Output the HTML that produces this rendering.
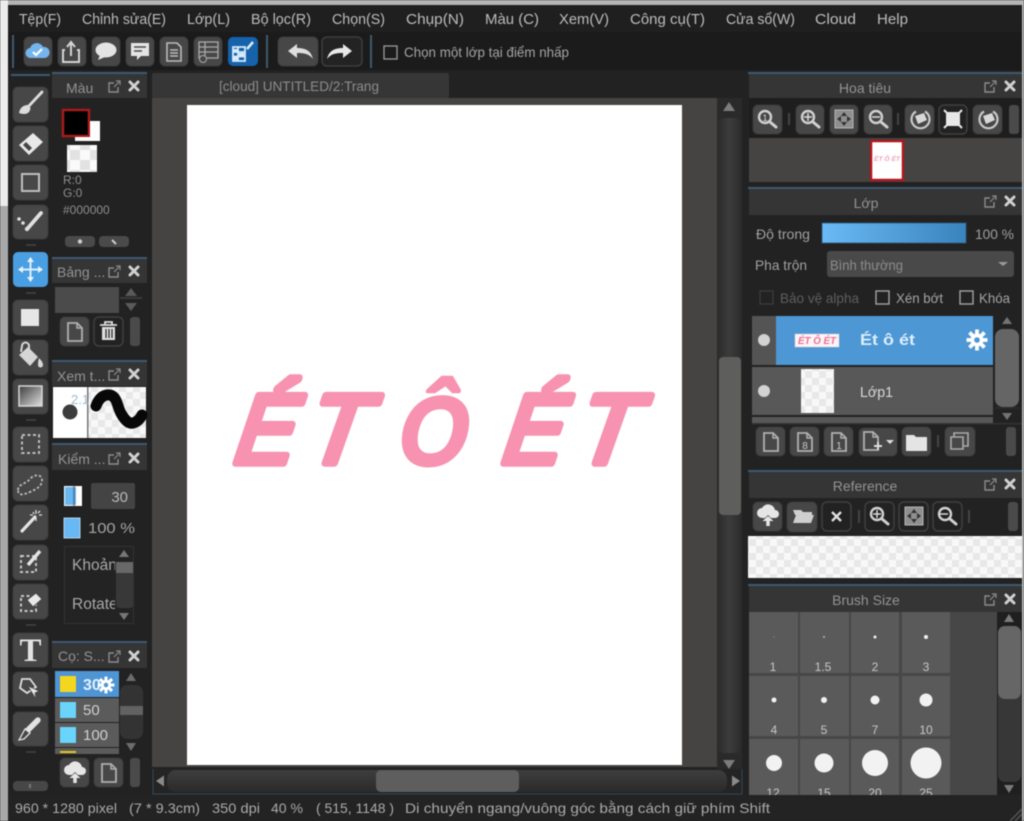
<!DOCTYPE html>
<html lang="vi">
<head>
<meta charset="utf-8">
<title>MediBang Paint</title>
<style>
html,body{margin:0;padding:0;width:1024px;height:821px;overflow:hidden;background:#222}
svg{display:block;filter:blur(.65px)}
text{font-family:"Liberation Sans","DejaVu Sans",sans-serif;font-size:14px;fill:#aaa}
.m{font-size:14.5px;fill:#bcbcbc}
.h{fill:#939393;font-size:14px}
.c{text-anchor:middle}
.n{fill:#c8c8c8;font-size:12px;text-anchor:middle}
.b{fill:#474747;stroke:#3a3a3a;stroke-width:1}
.d{fill:#222;stroke:#3f3f3f;stroke-width:1.5}
.ln{fill:#3e5a70}
.hd{fill:#353535}
.art{font-size:98px;font-style:italic;fill:#f793b0;stroke:#f793b0;stroke-width:7.5px;stroke-linejoin:round;stroke-linecap:round}
.art2{font-size:98px;font-style:italic;font-weight:bold;fill:#f793b0;stroke:#f793b0;stroke-width:3px;stroke-linejoin:round}
</style>
</head>
<body>
<svg xmlns="http://www.w3.org/2000/svg" width="1024" height="821" viewBox="0 0 1024 821">
<defs>
<pattern id="ck" width="20" height="20" patternUnits="userSpaceOnUse"><rect width="20" height="20" fill="#fafafa"/><rect width="10" height="10" fill="#e2e2e2"/><rect x="10" y="10" width="10" height="10" fill="#e2e2e2"/></pattern>
<pattern id="ck2" width="14" height="14" patternUnits="userSpaceOnUse"><rect width="14" height="14" fill="#f8f8f8"/><rect width="7" height="7" fill="#e8e8e8"/><rect x="7" y="7" width="7" height="7" fill="#e8e8e8"/></pattern>
<linearGradient id="bar" x1="0" x2="1" y1="0" y2="0"><stop offset="0" stop-color="#6abaf5"/><stop offset="1" stop-color="#3a83bd"/></linearGradient>
<linearGradient id="gr" x1="0" x2="1" y1="0" y2="1"><stop offset="0" stop-color="#3c3c3c"/><stop offset="1" stop-color="#e0e0e0"/></linearGradient>
<linearGradient id="sv" x1="0" x2="1"><stop offset="0" stop-color="#2c2c2c"/><stop offset=".5" stop-color="#3c3c3c"/><stop offset="1" stop-color="#2c2c2c"/></linearGradient>
<linearGradient id="sh" x1="0" x2="0" y1="0" y2="1"><stop offset="0" stop-color="#3e3e3e"/><stop offset="1" stop-color="#2a2a2a"/></linearGradient>

<g id="hdr"><path d="M6 3H1v9h9V7" fill="none" stroke="#8c8c8c" stroke-width="1.400"/><path d="M6 7l5-5M8 1h4v4" fill="none" stroke="#8c8c8c" stroke-width="1.200"/><path d="M22 2l8 8M30 2l-8 8" stroke="#d0d0d0" stroke-width="3" stroke-linecap="round"/></g>

<g id="doc"><path d="M8 6h9l5 5v13H8z" fill="none" stroke="#b0b0b0" stroke-width="1.800"/><path d="M17 6v5h5" fill="none" stroke="#b0b0b0" stroke-width="1.500"/></g>
<g id="mag"><circle cx="13" cy="13" r="6" fill="none" stroke="#d0d0d0" stroke-width="2.400"/><path d="M18 18l6 5" stroke="#d0d0d0" stroke-width="3" stroke-linecap="round"/></g>
<g id="fit"><rect x="6" y="6" width="18" height="18" fill="#8f8f8f" stroke="#b5b5b5"/><path d="M15 8l3 4h-6zM15 22l3-4h-6zM8 15l4-3v6zM22 15l-4-3v6z" fill="#333"/></g>
<g id="rot"><path d="M20 7.500a9 9 0 1 1-9 0" fill="none" stroke="#c8c8c8" stroke-width="2.200"/><path d="M10 12l9-3 3 7-9 4z" fill="#d8d8d8"/></g>
<g id="cup"><path d="M9 17a5 5 0 0 1 0-10 7 7 0 0 1 13 2 4 4 0 0 1 0 8h-4l-3-3-3 3z" fill="#e6e6e6"/><path d="M15 25v-7" stroke="#e6e6e6" stroke-width="3.500"/><path d="M9.500 20l5.500-5 5.500 5z" fill="#e6e6e6"/></g>
<g id="gear"><circle r="6.500" fill="#fff"/><path d="M0-10.500V10.500M-10.500 0H10.500M-7.500-7.500L7.500 7.500M-7.500 7.500L7.500-7.500" stroke="#fff" stroke-width="3.800"/><circle r="2.800" fill="#4d97d4"/></g>
</defs>

<!-- outer screenshot edge -->
<rect width="1024" height="821" fill="#222"/>
<rect width="1024" height="5" fill="#b4b4b4"/>
<rect y="0" width="8" height="206" fill="#ececec"/>
<rect y="206" width="8" height="615" fill="#a8a8a8"/>
<rect x="1022" width="2" height="821" fill="#b8b8b8"/>

<!-- menu -->
<rect x="8" y="5" width="1014" height="27" fill="#1f1f1f"/>
<rect x="8" y="32" width="1014" height="38" fill="#1b1b1b"/>
<rect x="8" y="70" width="1014" height="725" fill="#222"/>
<g>
<text class="m" x="19" y="24" textLength="42" lengthAdjust="spacingAndGlyphs">Tệp(F)</text>
<text class="m" x="82" y="24" textLength="84" lengthAdjust="spacingAndGlyphs">Chỉnh sửa(E)</text>
<text class="m" x="187" y="24" textLength="43" lengthAdjust="spacingAndGlyphs">Lớp(L)</text>
<text class="m" x="251" y="24" textLength="60" lengthAdjust="spacingAndGlyphs">Bộ lọc(R)</text>
<text class="m" x="332" y="24" textLength="53" lengthAdjust="spacingAndGlyphs">Chọn(S)</text>
<text class="m" x="406" y="24" textLength="58" lengthAdjust="spacingAndGlyphs">Chụp(N)</text>
<text class="m" x="485" y="24" textLength="54" lengthAdjust="spacingAndGlyphs">Màu (C)</text>
<text class="m" x="559" y="24" textLength="50" lengthAdjust="spacingAndGlyphs">Xem(V)</text>
<text class="m" x="630" y="24" textLength="75" lengthAdjust="spacingAndGlyphs">Công cụ(T)</text>
<text class="m" x="726" y="24" textLength="69" lengthAdjust="spacingAndGlyphs">Cửa sổ(W)</text>
<text class="m" x="815" y="24" textLength="41" lengthAdjust="spacingAndGlyphs">Cloud</text>
<text class="m" x="877" y="24" textLength="31" lengthAdjust="spacingAndGlyphs">Help</text>
</g>

<!-- toolbar -->
<rect x="12" y="35" width="2" height="33" fill="#3e5a70"/>
<rect x="266" y="35" width="2" height="33" fill="#3e5a70"/>
<rect x="370" y="35" width="2" height="33" fill="#3e5a70"/>
<rect class="b" x="24" y="37" width="28" height="29" rx="5"/>
<rect class="b" x="58" y="37" width="28" height="29" rx="5"/>
<rect class="b" x="92" y="37" width="28" height="29" rx="5"/>
<rect class="b" x="126" y="37" width="28" height="29" rx="5"/>
<rect class="b" x="160" y="37" width="28" height="29" rx="5"/>
<rect class="b" x="194" y="37" width="28" height="29" rx="5"/>
<rect x="228" y="37" width="30" height="29" rx="5" fill="#1663ac"/>
<path d="M31 58a5 5 0 0 1-1-10 7 7 0 0 1 13-1 5.500 5.500 0 0 1 2 11z" fill="#74b5ee"/><path d="M33 52l3 3 6-6" fill="none" stroke="#fff" stroke-width="2.200"/>
<path d="M65 50h-2v12h16V50h-2" fill="none" stroke="#d4d4d4" stroke-width="2"/><path d="M71 56V43M67 47l4-5 4 5" fill="none" stroke="#d4d4d4" stroke-width="2"/>
<ellipse cx="106" cy="50" rx="10.500" ry="7.500" fill="#e4e4e4"/><path d="M100 55l-2 5 7-3z" fill="#e4e4e4"/>
<path d="M131 43h18v13h-8l-4 4v-4h-6z" fill="#e4e4e4"/><path d="M134 47h12M134 51h8" stroke="#4a4a4a" stroke-width="1.600"/>
<path d="M167 43h10l4 4v14h-14z" fill="none" stroke="#bbb" stroke-width="1.600"/><path d="M170 50h8M170 53h8M170 56h8" stroke="#bbb" stroke-width="1.400"/>
<rect x="199" y="42" width="19" height="16" fill="none" stroke="#aaa" stroke-width="1.300"/><path d="M199 47h19M199 52h19M205 42v16" stroke="#aaa" stroke-width="1.300"/><circle cx="203" cy="59" r="3.500" fill="#474747" stroke="#aaa"/>
<path d="M233 47h12v14h-12zM238 47v14M233 52h12M233 56.500h12" fill="none" stroke="#d8ecfa" stroke-width="1.800"/><path d="M233 49h5v3h-5zM239 53h5v3h-5zM233 57h5v3h-5z" fill="#d8ecfa"/><path d="M247 49l6-7" stroke="#d8ecfa" stroke-width="2.500"/>
<rect class="b" x="278" y="37" width="40" height="29" rx="5"/>
<rect x="322" y="37" width="40" height="29" rx="5" fill="#232323" stroke="#3d3d3d" stroke-width="1.500"/>
<path d="M288 51l9-7v4c9 0 14 3 16 11-4-5-8-6-16-6v5z" fill="#dedede"/>
<path d="M352 51l-9-7v4c-9 0-14 3-16 11 4-5 8-6 16-6v5z" fill="#e8e8e8"/>
<rect x="384" y="46" width="13" height="13" fill="none" stroke="#9c9c9c" stroke-width="1.300"/>
<text x="404" y="57" textLength="165" lengthAdjust="spacingAndGlyphs" style="fill:#a4a4a4">Chọn một lớp tại điểm nhấp</text>

<!-- tools -->
<rect x="11" y="74" width="39" height="2" fill="#3e5a70"/>
<g fill="#474747" stroke="#3b3b3b">
<rect x="13" y="87" width="35" height="35" rx="5"/><rect x="13" y="126" width="35" height="35" rx="5"/><rect x="13" y="165" width="35" height="35" rx="5"/><rect x="13" y="205" width="35" height="34" rx="5"/>
<rect x="13" y="300" width="35" height="35" rx="5"/><rect x="13" y="340" width="35" height="35" rx="5"/><rect x="13" y="379" width="35" height="35" rx="5"/>
<rect x="13" y="427" width="35" height="35" rx="5"/><rect x="13" y="466" width="35" height="35" rx="5"/><rect x="13" y="505" width="35" height="35" rx="5"/><rect x="13" y="545" width="35" height="35" rx="5"/><rect x="13" y="584" width="35" height="35" rx="5"/>
<rect x="13" y="633" width="35" height="34" rx="5"/><rect x="13" y="672" width="35" height="34" rx="5"/><rect x="13" y="712" width="35" height="34" rx="5"/>
</g>
<rect x="13" y="252" width="35" height="35" rx="5" fill="#4a9fe2"/>
<path d="M26 245h10M26 293h10M26 420h10M26 625h10M26 752h10" stroke="#444" stroke-width="1.500"/>
<rect x="13" y="781" width="35" height="10" rx="4" fill="#474747"/><rect x="29" y="784" width="2" height="4" fill="#777"/>
<!-- brush -->
<path d="M42 92L27 108" stroke="#dcdcdc" stroke-width="2.800" stroke-linecap="round"/><path d="M19 113c1-6 5-8 9-8 3 2 3 4 1 7-3 3-7 2-10 1z" fill="#dcdcdc"/>
<!-- eraser -->
<path d="M19 145l14-12 10 9-14 13z" fill="#e8e8e8"/><path d="M23 145l6 6 3-3-6-6z" fill="#474747"/>
<!-- rect -->
<rect x="22" y="174" width="17" height="17" fill="none" stroke="#bfbfbf" stroke-width="2"/>
<!-- pen -->
<path d="M28 228l13-15" stroke="#e0e0e0" stroke-width="3.800" stroke-linecap="round"/><circle cx="19" cy="219" r="1.800" fill="#ddd"/><circle cx="23" cy="223" r="1.800" fill="#ddd"/><circle cx="27" cy="229" r="2.200" fill="#ddd"/>
<!-- move -->
<path d="M30.500 258v23M19 269.500h23" stroke="#d8eefc" stroke-width="2"/><path d="M30.500 257l3.500 5h-7zM30.500 282l3.500-5h-7zM18 269.500l5-3.500v7zM43 269.500l-5-3.500v7z" fill="#e4f2fc"/>
<!-- fill -->
<rect x="21" y="309" width="18" height="17" fill="#e6e6e6"/>
<!-- bucket -->
<path d="M19 355l9-8 10 10-8 9z" fill="#d6d6d6"/><path d="M21 352l1-6a3.500 3.500 0 0 1 7 0v5" fill="none" stroke="#d6d6d6" stroke-width="2"/><path d="M39 358c3 3 4 5 4 7a2.500 2.500 0 0 1-5 0c0-2 0-4 1-7z" fill="#d6d6d6"/>
<!-- gradient -->
<rect x="19" y="386" width="23" height="20" fill="url(#gr)" stroke="#d8d8d8" stroke-width="1.500"/>
<!-- selection -->
<rect x="22" y="435" width="17" height="18" fill="none" stroke="#bdbdbd" stroke-width="2" stroke-dasharray="3 2.500"/>
<path d="M18 490c0-6 8-6 12-11s12-5 12 1-5 9-12 12-12 4-12-2z" fill="none" stroke="#bdbdbd" stroke-width="1.800" stroke-dasharray="2.500 2"/>
<path d="M22 531l13-14" stroke="#e4e4e4" stroke-width="3.200" stroke-linecap="round"/><path d="M36 510v4M36 518v3M30 515h3M39 515h3M33 512l1 2M40 511l-2 2" stroke="#ddd" stroke-width="1.300"/>
<rect x="21" y="556" width="15" height="16" fill="none" stroke="#c6c6c6" stroke-width="2" stroke-dasharray="3 2.500"/><path d="M28 565l12-14" stroke="#e4e4e4" stroke-width="3.500"/>
<rect x="21" y="596" width="15" height="15" fill="none" stroke="#c6c6c6" stroke-width="2" stroke-dasharray="3 2.500"/><path d="M27 600l9-7 6 6-9 8z" fill="#e8e8e8" stroke="#474747"/>
<text x="30.500" y="661" text-anchor="middle" style="font-family:'Liberation Serif',serif;font-size:33px;font-weight:bold;fill:#e2e2e2">T</text>
<path d="M22 679h8l6 8-9 6-7-5z" fill="none" stroke="#ddd" stroke-width="1.800"/><path d="M28 686l11 5-4 2 1 6z" fill="#e8e8e8" stroke="#474747" stroke-width=".7"/>
<path d="M19 740l6-11 11-11c3-2 6 1 4 4l-11 11z" fill="#e2e2e2"/><path d="M19 740l6-11 5 4-6 6z" fill="#474747" stroke="#e2e2e2" stroke-width="1.300"/>

<!-- left panels -->
<rect x="52" y="72" width="95" height="2" class="ln"/>
<rect x="52" y="74" width="95" height="24" class="hd"/>
<text class="h" x="66" y="93">Màu</text>
<use href="#hdr" x="108" y="80"/>
<rect x="63" y="110" width="26" height="26" fill="#000" stroke="#a81a1a" stroke-width="2.500"/>
<path d="M90 121h10v20H75v-4h15z" fill="#fdfdfd"/>
<rect x="67" y="145" width="30" height="27" fill="url(#ck)"/>
<text x="63" y="184" style="font-size:12px;fill:#8e8e8e">R:0</text>
<text x="63" y="197" style="font-size:12px;fill:#8e8e8e">G:0</text>
<text x="63" y="214" style="font-size:12px;fill:#8e8e8e">#000000</text>
<rect x="65" y="236" width="30" height="11" rx="4" fill="#4a4a4a"/><rect x="99" y="236" width="30" height="11" rx="4" fill="#4a4a4a"/>
<circle cx="80" cy="241.500" r="2.200" fill="#ccc"/><path d="M112 240l4 4" stroke="#ccc" stroke-width="2"/>

<rect x="52" y="257" width="95" height="2" class="ln"/>
<rect x="52" y="259" width="95" height="24" class="hd"/>
<text class="h" x="57" y="277">Bảng ...</text>
<use href="#hdr" x="108" y="265"/>
<rect x="55" y="287" width="64" height="26" fill="#4b4b4b"/>
<path d="M131 288l6 8h-12zM131 311l6-8h-12z" fill="#5a5a5a"/>
<rect x="120" y="297" width="22" height="2" fill="#3a3a3a"/>
<rect class="b" x="60" y="317" width="29" height="29" rx="5"/><use href="#doc" x="60" y="317"/>
<rect class="d" x="94" y="317" width="29" height="29" rx="5"/>
<path d="M100 325h17M105 325v-3h7v3" stroke="#ddd" stroke-width="1.800" fill="none"/><path d="M102 327h13v13h-13z" fill="#ddd"/><path d="M106 329v9M109 329v9M112 329v9" stroke="#222" stroke-width="1.200"/>
<rect x="130" y="317" width="10" height="29" rx="3" fill="#4a4a4a"/>

<rect x="52" y="360" width="95" height="2" class="ln"/>
<rect x="52" y="362" width="95" height="24" class="hd"/>
<text class="h" x="57" y="381">Xem t...</text>
<use href="#hdr" x="108" y="368"/>
<rect x="53" y="387" width="93" height="51" fill="url(#ck2)"/>
<rect x="53" y="387" width="34" height="51" fill="#fff"/>
<rect x="87" y="387" width="1.500" height="51" fill="#777"/>
<text x="71" y="404" style="font-size:13px;fill:#9fbad2">2.1</text>
<circle cx="70" cy="412" r="7.500" fill="#3c3c3c"/>
<path d="M96 406c3-8 8-12 14-11 8 2 7 13 12 20 3 5 7 9 11 8 4-1 7-4 9-8" fill="none" stroke="#080808" stroke-width="11" stroke-linecap="round"/>
<path d="M94 408c1-5 3-9 6-12" fill="none" stroke="#080808" stroke-width="3"/>

<rect x="52" y="443" width="95" height="2" class="ln"/>
<rect x="52" y="445" width="95" height="25" class="hd"/>
<text class="h" x="58" y="464">Kiểm ...</text>
<use href="#hdr" x="108" y="452"/>
<rect x="64" y="486" width="18" height="20" fill="#fff"/><rect x="65" y="487" width="11" height="18" fill="#68b8f4"/><rect x="73" y="486" width="2" height="20" fill="#333" opacity=".4"/>
<rect x="91" y="483" width="44" height="26" rx="2" fill="#444"/>
<text x="128" y="502" text-anchor="end" style="font-size:15px;fill:#b8b8b8">30</text>
<rect x="64" y="518" width="16" height="20" fill="#68b8f4" stroke="#cfe8fa" stroke-width=".8"/>
<text x="88" y="533" textLength="47" lengthAdjust="spacingAndGlyphs" style="font-size:15px;fill:#a4a4a4">100 %</text>
<rect x="64.500" y="546.500" width="69" height="77" fill="#232323" stroke="#333"/>
<text x="72" y="570" style="font-size:15.500px;fill:#a8a8a8">Khoản</text>
<text x="72" y="609" style="font-size:15.500px;fill:#a8a8a8">Rotate</text>
<rect x="115" y="547" width="18" height="76" fill="#232323"/>
<rect x="116" y="562" width="17" height="46" rx="3" fill="#383838"/>
<rect x="116" y="562" width="17" height="11" fill="#686868"/>
<path d="M124 550l5 7h-10zM124 620l5-7h-10z" fill="#777"/>

<rect x="52" y="641" width="95" height="2" class="ln"/>
<rect x="52" y="643" width="95" height="25" class="hd"/>
<text class="h" x="58" y="661">Cọ: S...</text>
<use href="#hdr" x="108" y="650"/>
<rect x="55" y="671" width="64" height="26" fill="#4f95d4"/>
<rect x="55" y="698" width="64" height="24" fill="#5b5b5b"/>
<rect x="55" y="723" width="64" height="24" fill="#5b5b5b"/>
<rect x="55" y="748" width="64" height="6" fill="#5b5b5b"/>
<rect x="60" y="676" width="16" height="16" fill="#f4d61e"/>
<rect x="60" y="702" width="16" height="16" fill="#6ad4fa"/>
<rect x="60" y="727" width="16" height="16" fill="#6ad4fa"/>
<rect x="60" y="751" width="16" height="2" fill="#e0c820"/>
<text x="83" y="690" style="font-size:16px;font-weight:bold;fill:#e4f2fc">30</text>
<use href="#gear" transform="translate(106 685) scale(.8)"/>
<text x="83" y="715" style="font-size:15px;fill:#d0d0d0">50</text>
<text x="83" y="740" style="font-size:15px;fill:#d0d0d0">100</text>
<rect x="120" y="685" width="23" height="54" rx="7" fill="#333"/><rect x="120" y="706" width="23" height="9" fill="#626262"/>
<path d="M131 673l5 8h-10zM131 751l5-8h-10z" fill="#6c6c6c"/>
<rect class="b" x="60" y="758" width="29" height="29" rx="5"/><use href="#cup" x="60" y="758"/>
<rect class="b" x="94" y="758" width="29" height="29" rx="5"/><use href="#doc" x="94" y="758"/>
<rect x="130" y="758" width="10" height="29" rx="3" fill="#4a4a4a"/>

<!-- canvas -->
<rect x="152" y="73" width="297" height="25" rx="2" fill="#363636"/>
<text x="299" y="91" class="c" style="fill:#8c8c8c" textLength="160" lengthAdjust="spacingAndGlyphs">[cloud] UNTITLED/2:Trang</text>
<rect x="152" y="98" width="565" height="669" fill="#454442"/>
<rect x="717" y="98" width="25" height="671" fill="#2a2a2a"/>
<rect x="187" y="105" width="495" height="660" fill="#fff"/>
<rect x="718" y="118" width="23" height="635" rx="6" fill="url(#sv)"/>
<rect x="719" y="357" width="22" height="158" rx="4" fill="#5e5e5c"/>
<path d="M729 102l6 9h-12zM729 769l6-9h-12z" fill="#7c7c7c"/>
<rect x="153" y="769" width="589" height="25" fill="#242424"/>
<path d="M153 769v25h589V769" fill="none" stroke="#33485a"/>
<rect x="167" y="770" width="560" height="22" rx="9" fill="url(#sh)"/>
<rect x="376" y="770" width="143" height="22" rx="5" fill="#5e5e5e"/>
<path d="M156 781l8-5.500v11zM740 781l-8-5.500v11z" fill="#8a8a8a"/>

<!-- pink art -->
<text class="art" transform="translate(233 463) skewX(-9) scale(.92,1)">É</text>
<text class="art" transform="translate(305 463) skewX(-9)">T</text>
<text class="art2" transform="translate(397 465) skewX(-4) scale(.91,1)">Ô</text>
<text class="art" transform="translate(501 463) skewX(-9) scale(.92,1)">É</text>
<text class="art" transform="translate(575 463) skewX(-9)">T</text>

<!-- navigator -->
<rect x="748" y="72" width="274" height="2" class="ln"/>
<rect x="749" y="74" width="273" height="24" class="hd"/>
<text x="865" y="93" class="c h">Hoa tiêu</text>
<use href="#hdr" x="984" y="80"/>
<rect x="749" y="98" width="273" height="40" fill="#1e1e1e"/>
<rect class="b" x="753" y="105" width="29" height="29" rx="5"/><use href="#mag" x="752" y="104"/><text x="765" y="121" class="c" style="font-size:9px;fill:#ddd">1</text>
<rect x="788" y="113" width="2" height="12" fill="#444"/>
<rect class="b" x="796" y="105" width="28" height="29" rx="5"/><use href="#mag" x="795" y="104"/><path d="M804 117h8M808 113v8" stroke="#ddd" stroke-width="1.500"/>
<rect class="b" x="830" y="105" width="28" height="29" rx="5"/><use href="#fit" x="829" y="104"/>
<rect class="b" x="864" y="105" width="28" height="29" rx="5"/><use href="#mag" x="863" y="104"/><path d="M872 117h8" stroke="#ddd" stroke-width="1.500"/>
<rect x="897" y="113" width="2" height="12" fill="#444"/>
<rect class="b" x="905" y="105" width="29" height="29" rx="5"/><use href="#rot" x="905" y="104"/>
<rect class="d" x="939" y="105" width="28" height="29" rx="5"/><rect x="946" y="112" width="14" height="14" fill="#e8e8e8"/><path d="M944 110l4 4M962 110l-4 4M944 128l4-4M962 128l-4-4" stroke="#e8e8e8" stroke-width="2"/>
<rect class="b" x="973" y="105" width="29" height="29" rx="5"/><use href="#rot" x="973" y="104"/>
<rect x="1009" y="105" width="10" height="29" rx="3" fill="#4a4a4a"/>
<rect x="749" y="138" width="273" height="44" fill="#454442"/>
<rect x="871" y="141" width="32" height="39" fill="#fff" stroke="#b0161e" stroke-width="2.500"/>
<text x="887" y="161" class="c" style="font-size:6px;font-weight:bold;font-style:italic;fill:#f0a0b8" textLength="26" lengthAdjust="spacingAndGlyphs">ÉT Ô ÉT</text>

<!-- layer -->
<rect x="748" y="187" width="274" height="2" class="ln"/>
<rect x="749" y="189" width="273" height="26" class="hd"/>
<text x="866" y="208" class="c h">Lớp</text>
<use href="#hdr" x="984" y="195"/>
<text x="756" y="239" textLength="54" lengthAdjust="spacingAndGlyphs" style="fill:#a0a0a0">Độ trong</text>
<rect x="822" y="223" width="144" height="20" fill="url(#bar)" stroke="#2c5b80" stroke-width=".8"/>
<text x="975" y="239" textLength="39" lengthAdjust="spacingAndGlyphs" style="fill:#a0a0a0">100 %</text>
<text x="755" y="270" textLength="52" lengthAdjust="spacingAndGlyphs" style="fill:#a0a0a0">Pha trộn</text>
<rect x="827" y="251" width="187" height="26" rx="3" fill="#494949"/>
<text x="830" y="270" textLength="73" lengthAdjust="spacingAndGlyphs" style="fill:#8c8c8c">Bình thường</text>
<path d="M998 262h10l-5 4z" fill="#9a9a9a"/>
<rect x="760" y="291" width="13" height="13" fill="none" stroke="#3c3c3c" stroke-width="1.300"/>
<text x="780" y="303" textLength="79" lengthAdjust="spacingAndGlyphs" style="fill:#5e5e5e">Bảo vệ alpha</text>
<rect x="876" y="291" width="13" height="13" fill="none" stroke="#a2a2a2" stroke-width="1.400"/>
<text x="896" y="303" textLength="47" lengthAdjust="spacingAndGlyphs" style="fill:#a4a4a4">Xén bớt</text>
<rect x="960" y="291" width="13" height="13" fill="none" stroke="#a2a2a2" stroke-width="1.400"/>
<text x="979" y="303" textLength="31" lengthAdjust="spacingAndGlyphs" style="fill:#a4a4a4">Khóa</text>

<rect x="752" y="316" width="24" height="49" fill="#545454"/>
<rect x="776" y="316" width="217" height="49" fill="#4d97d4"/>
<rect x="752" y="367" width="241" height="48" fill="#585858"/>
<rect x="752" y="417" width="241" height="6" fill="#585858"/>
<circle cx="764" cy="340" r="6" fill="#d2d2d2"/><circle cx="764" cy="391" r="6" fill="#d2d2d2"/>
<rect x="795" y="334" width="44" height="13" fill="#fdf4f7" stroke="#d0d0d0" stroke-width=".6"/>
<text x="817" y="344" class="c" style="font-size:10px;font-weight:bold;font-style:italic;fill:#ee6f94" textLength="38" lengthAdjust="spacingAndGlyphs">ÉT Ô ÉT</text>
<text x="860" y="345" style="font-size:16px;font-weight:bold;fill:#dcedf9" textLength="55" lengthAdjust="spacingAndGlyphs">Ét ô ét</text>
<use href="#gear" transform="translate(977 340)"/>
<rect x="801" y="369" width="33" height="44" fill="url(#ck2)"/>
<text x="860" y="397" style="font-size:15px;fill:#d8d8d8" textLength="33" lengthAdjust="spacingAndGlyphs">Lớp1</text>
<rect x="995" y="329" width="24" height="78" rx="8" fill="#656565"/>
<rect x="995" y="407" width="24" height="2" fill="#2a2a2a"/>
<path d="M1007 317l5 7h-10zM1007 420l5-7h-10z" fill="#737373"/>
<rect x="752" y="423" width="270" height="1.500" fill="#333"/>
<rect class="b" x="756" y="427" width="29" height="29" rx="5"/><use href="#doc" x="756" y="427"/>
<rect class="b" x="790" y="427" width="29" height="29" rx="5"/><use href="#doc" x="790" y="427"/><text x="805" y="449" class="c" style="font-size:10px;fill:#ccc">8</text>
<rect class="b" x="824" y="427" width="29" height="29" rx="5"/><use href="#doc" x="824" y="427"/><text x="839" y="449" class="c" style="font-size:10px;fill:#ccc">1</text>
<rect class="b" x="859" y="428" width="38" height="28" rx="5"/><use href="#doc" x="856" y="426"/><path d="M874 446h8M878 442v8" stroke="#ddd" stroke-width="2"/><path d="M886 440h8l-4 4z" fill="#ddd"/>
<rect class="b" x="902" y="427" width="29" height="29" rx="5"/><path d="M906 435h8l2 2h11v14h-21z" fill="#e4e4e4"/>
<rect x="937" y="435" width="2" height="12" fill="#444"/>
<rect class="b" x="945" y="427" width="30" height="29" rx="5"/><path d="M951 437h12v12h-12z" fill="none" stroke="#aaa" stroke-width="1.600"/><path d="M954 437v-4h14v13h-5" fill="none" stroke="#aaa" stroke-width="1.600"/>
<rect x="1006" y="427" width="10" height="29" rx="3" fill="#4a4a4a"/>

<!-- reference -->
<rect x="748" y="470" width="274" height="2" class="ln"/>
<rect x="749" y="472" width="273" height="26" class="hd"/>
<text x="865" y="491" class="c h">Reference</text>
<use href="#hdr" x="984" y="478"/>
<rect class="b" x="753" y="502" width="29" height="29" rx="5"/><use href="#cup" x="753" y="501"/>
<rect class="b" x="787" y="502" width="30" height="30" rx="5"/><path d="M793 510h8l2 2h9v3h-17zM793 523l3-8h18l-3 8z" fill="#cfcfcf"/>
<rect class="d" x="822" y="502" width="29" height="29" rx="5"/><path d="M832 512l9 9M841 512l-9 9" stroke="#e0e0e0" stroke-width="2.400"/>
<rect x="858" y="510" width="2" height="13" fill="#444"/>
<rect class="d" x="865" y="502" width="29" height="29" rx="5"/><use href="#mag" x="864" y="501"/><path d="M873 514h8M877 510v8" stroke="#ddd" stroke-width="1.500"/>
<rect class="d" x="899" y="502" width="29" height="29" rx="5"/><use href="#fit" x="899" y="501"/>
<rect class="d" x="933" y="502" width="29" height="29" rx="5"/><use href="#mag" x="932" y="501"/><path d="M940 514h8" stroke="#ddd" stroke-width="1.500"/>
<rect x="968" y="510" width="2" height="13" fill="#444"/>
<rect x="1008" y="502" width="10" height="29" rx="3" fill="#4a4a4a"/>
<rect x="748" y="536" width="274" height="42" fill="url(#ck2)"/>

<!-- brush size -->
<rect x="748" y="584" width="274" height="2" class="ln"/>
<rect x="749" y="586" width="273" height="26" class="hd"/>
<text x="866" y="605" class="c h">Brush Size</text>
<use href="#hdr" x="984" y="593"/>
<rect x="749" y="612" width="248" height="183" fill="#474747"/>
<g fill="#5a5a5a">
<rect x="749" y="612" width="49" height="61"/><rect x="800" y="612" width="49" height="61"/><rect x="851" y="612" width="48" height="61"/><rect x="902" y="612" width="48" height="61"/>
<rect x="749" y="676" width="49" height="60"/><rect x="800" y="676" width="49" height="60"/><rect x="851" y="676" width="48" height="60"/><rect x="902" y="676" width="48" height="60"/>
<rect x="749" y="739" width="49" height="56"/><rect x="800" y="739" width="49" height="56"/><rect x="851" y="739" width="48" height="56"/><rect x="902" y="739" width="48" height="56"/>
</g>
<g fill="#f2f2f2">
<circle cx="774" cy="637" r=".5" opacity=".5"/><circle cx="824" cy="637" r="1" opacity=".6"/><circle cx="875" cy="637" r="1.500"/><circle cx="926" cy="637" r="2"/>
<circle cx="774" cy="700" r="2.500"/><circle cx="824" cy="700" r="3"/><circle cx="875" cy="700" r="4.500"/><circle cx="926" cy="700" r="6.500"/>
<circle cx="774" cy="763" r="8"/><circle cx="824" cy="763" r="9.500"/><circle cx="875" cy="763" r="13"/><circle cx="926" cy="763" r="15.500"/>
</g>
<g>
<text class="n" x="773" y="671">1</text><text class="n" x="823" y="671">1.5</text><text class="n" x="875" y="671">2</text><text class="n" x="926" y="671">3</text>
<text class="n" x="774" y="734">4</text><text class="n" x="824" y="734">5</text><text class="n" x="875" y="734">7</text><text class="n" x="926" y="734">10</text>
<text class="n" x="773" y="797">12</text><text class="n" x="824" y="797">15</text><text class="n" x="875" y="797">20</text><text class="n" x="926" y="797">25</text>
</g>
<rect x="997" y="612" width="25" height="183" fill="#1f1f1f"/>
<rect x="998" y="626" width="23" height="156" rx="7" fill="#373737"/>
<rect x="998" y="626" width="23" height="73" rx="7" fill="#666"/>
<path d="M1009 614l5 8h-10zM1009 793l5-8h-10z" fill="#7a7a7a"/>

<!-- status -->
<rect x="8" y="795" width="1014" height="26" fill="#232323"/>
<g>
<text x="15" y="813" textLength="102" lengthAdjust="spacingAndGlyphs">960 * 1280 pixel</text>
<text x="129" y="813" textLength="71" lengthAdjust="spacingAndGlyphs">(7 * 9.3cm)</text>
<text x="212" y="813" textLength="48" lengthAdjust="spacingAndGlyphs">350 dpi</text>
<text x="271" y="813" textLength="32" lengthAdjust="spacingAndGlyphs">40 %</text>
<text x="316" y="813" textLength="78" lengthAdjust="spacingAndGlyphs">( 515, 1148 )</text>
<text x="405" y="813" textLength="365" lengthAdjust="spacingAndGlyphs">Di chuyển ngang/vuông góc bằng cách giữ phím Shift</text>
</g>
<path d="M1010 821l12-12M1015 821l7-7" stroke="#555" stroke-width="1.500"/>
</svg>
</body>
</html>
